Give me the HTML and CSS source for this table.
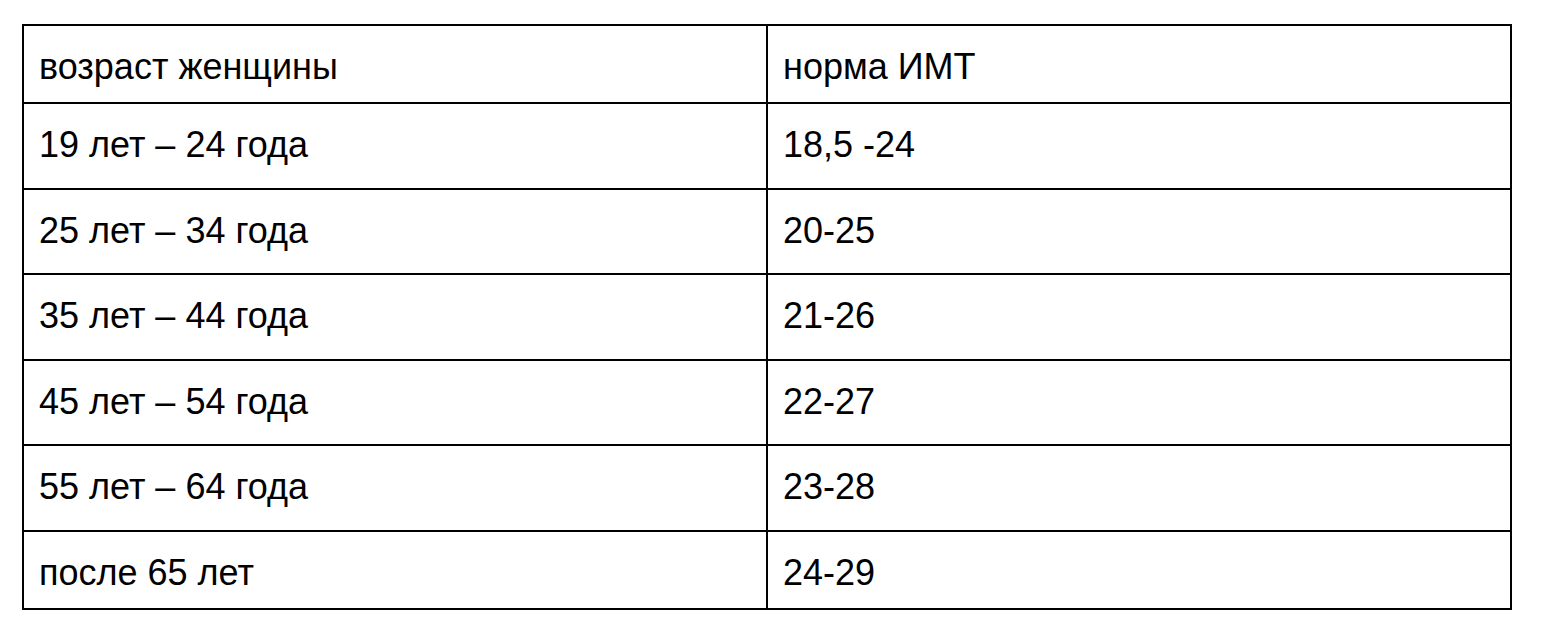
FILE: index.html
```html
<!DOCTYPE html>
<html lang="ru">
<head>
<meta charset="utf-8">
<title>Норма ИМТ для женщин</title>
<link rel="stylesheet" href="styles.css">
</head>
<body>
<table class="bmi">
  <tbody>
    <tr class="row-edge"><td>возраст женщины</td><td>норма ИМТ</td></tr>
    <tr class="row-tall"><td>19 лет – 24 года</td><td>18,5 -24</td></tr>
    <tr class="row-short"><td>25 лет – 34 года</td><td>20-25</td></tr>
    <tr class="row-tall"><td>35 лет – 44 года</td><td>21-26</td></tr>
    <tr class="row-short"><td>45 лет – 54 года</td><td>22-27</td></tr>
    <tr class="row-tall"><td>55 лет – 64 года</td><td>23-28</td></tr>
    <tr class="row-edge"><td>после 65 лет</td><td>24-29</td></tr>
  </tbody>
</table>
</body>
</html>
```
FILE: styles.css
```css
html, body {
  margin: 0;
  padding: 0;
  background: #ffffff;
}

body {
  padding: 24px 0 0 22px;
  font-family: "Liberation Sans", Arial, sans-serif;
  color: #000000;
}

.bmi {
  border-collapse: separate;
  border-spacing: 0;
  border-top: 2px solid #000;
  border-left: 2px solid #000;
}

.bmi td {
  box-sizing: border-box;
  width: 744px;
  padding: 23px 16px 0 15px;
  border-right: 2px solid #000;
  border-bottom: 2px solid #000;
  font-size: 36px;
  line-height: 1;
  vertical-align: top;
  white-space: nowrap;
}

.row-edge td { height: 78px; }
.row-tall td { height: 86px; }
.row-short td { height: 85px; }
```
